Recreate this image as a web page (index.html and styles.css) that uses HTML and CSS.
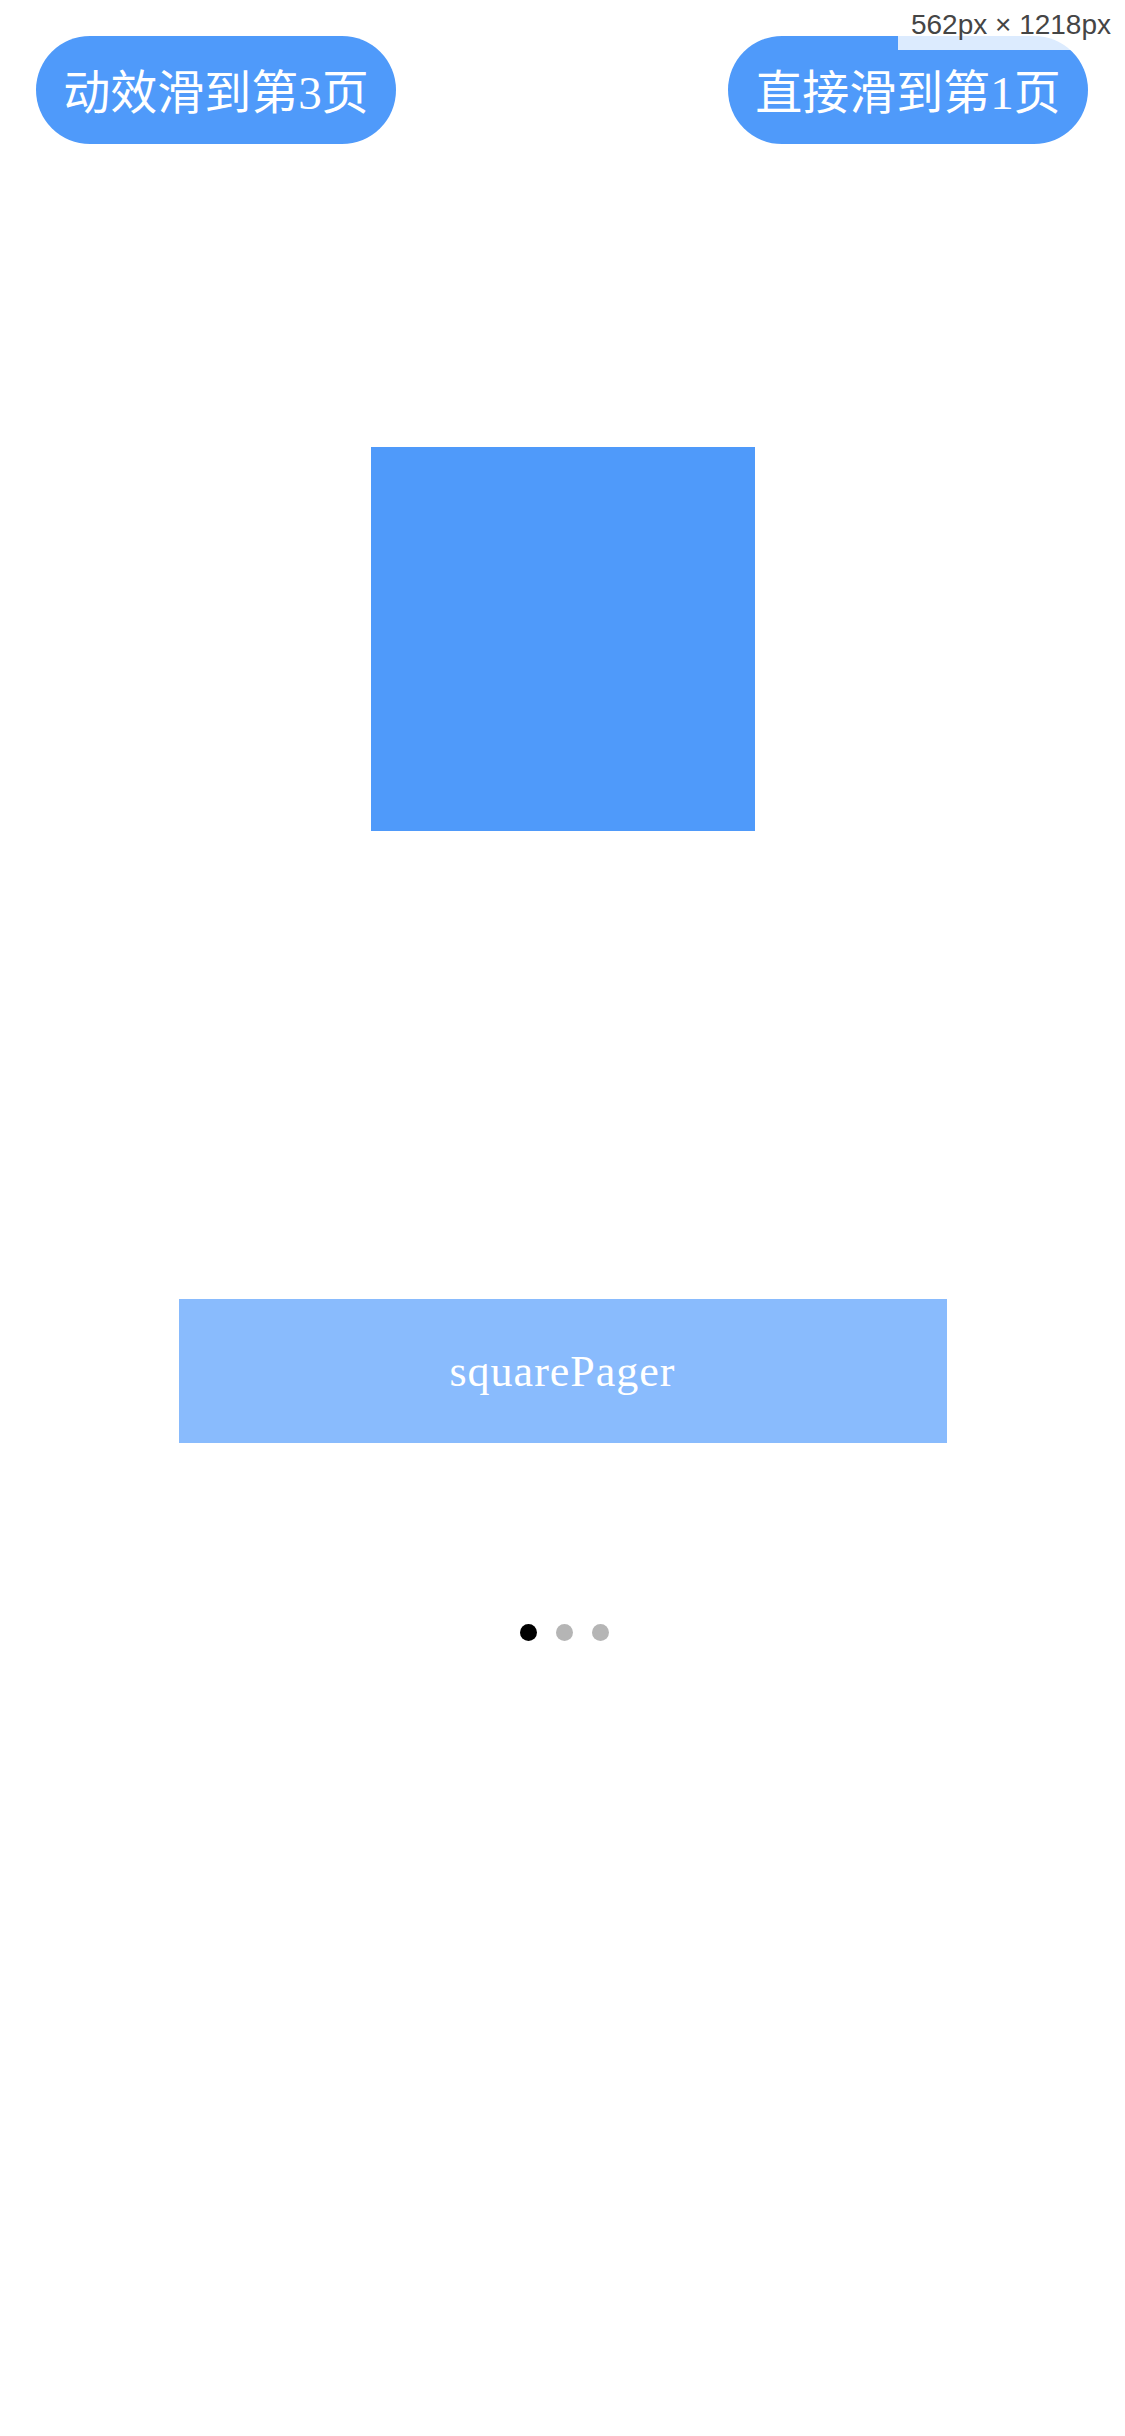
FILE: index.html
```html
<!DOCTYPE html>
<html lang="zh">
<head>
<meta charset="utf-8">
<title>squarePager</title>
<link rel="stylesheet" href="styles.css">
</head>
<body>
<div class="page">
  <div class="size-label">562px × 1218px</div>
  <div class="top-bar">
    <div class="pill-btn">动效滑到第3页</div>
    <div class="pill-btn">直接滑到第1页</div>
  </div>
  <div class="square"></div>
  <div class="pager-box">squarePager</div>
  <div class="dots">
    <span class="dot active"></span>
    <span class="dot"></span>
    <span class="dot"></span>
  </div>
</div>
</body>
</html>
```

FILE: styles.css
```css
html, body {
  margin: 0;
  padding: 0;
  background: #ffffff;
}

.page {
  position: relative;
  width: 1125px;
  min-height: 2436px;
  display: flex;
  flex-direction: column;
  align-items: center;
  font-family: "Liberation Serif", "Noto Sans CJK SC", serif;
}

.size-label {
  position: absolute;
  top: 0;
  right: 0;
  height: 50px;
  line-height: 50px;
  padding: 0 14px 0 13px;
  background: rgba(255, 255, 255, 0.8);
  color: #454545;
  font-family: "Liberation Sans", Arial, sans-serif;
  font-size: 28px;
  z-index: 2;
}

.top-bar {
  width: 100%;
  box-sizing: border-box;
  padding: 36px 37px 0 36px;
  display: flex;
  justify-content: space-between;
}

.pill-btn {
  width: 360px;
  height: 108px;
  border-radius: 54px;
  background: #4f9afa;
  color: #ffffff;
  font-size: 47px;
  padding-bottom: 4px;
  box-sizing: border-box;
  display: flex;
  align-items: center;
  justify-content: center;
  white-space: nowrap;
}

.square {
  width: 384px;
  height: 384px;
  margin-top: 303px;
  background: #4f9afa;
}

.pager-box {
  width: 768px;
  height: 144px;
  margin-top: 468px;
  background: #89bbfd;
  color: #ffffff;
  font-size: 44px;
  letter-spacing: 1px;
  display: flex;
  align-items: center;
  justify-content: center;
}

.dots {
  margin-top: 181px;
  margin-left: 3px;
  display: flex;
  gap: 19px;
}

.dot {
  width: 17px;
  height: 17px;
  border-radius: 50%;
  background: #b5b5b5;
}

.dot.active {
  background: #000000;
}
```
